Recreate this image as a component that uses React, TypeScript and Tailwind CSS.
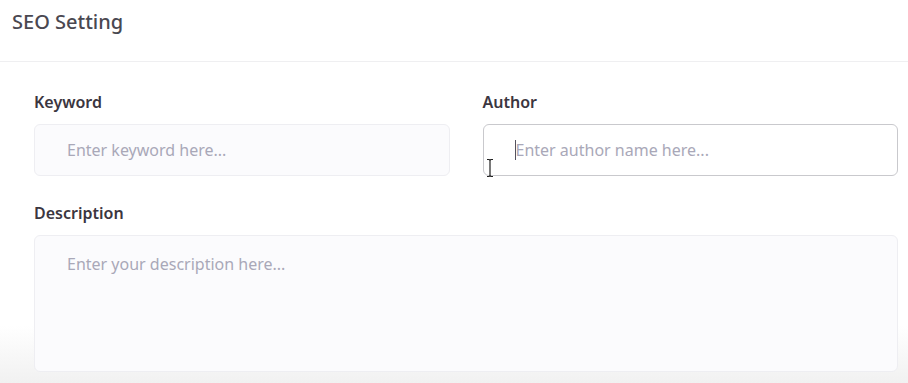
import React from 'react';

const font = { fontFamily: '"Noto Sans", "Open Sans", sans-serif' };

const Field: React.FC<{ label: string; placeholder: string; focused?: boolean }> = ({ label, placeholder, focused }) => (
    <div className="flex flex-col">
        <label className="h-5 mb-3 text-[16px] leading-5 font-semibold text-[#3b3640]">{label}</label>
        <div className="relative">
            <input
                placeholder={placeholder}
                className={`w-full h-[52px] rounded-md pl-[32px] pr-4 text-[16px] outline-none placeholder:text-[#a9a8b8] ${
                    focused ? 'bg-white border border-[#c9c9cd]' : 'bg-[#fbfbfd] border border-[#eeeef2]'
                }`}
            />
            {focused && (
                <>
                    {/* text caret */}
                    <span className="absolute left-[32px] top-[16px] w-px h-[20px] bg-[#55525e]" />
                    {/* mouse I-beam */}
                    <svg className="absolute left-[2px] top-[34px]" width="10" height="20" viewBox="0 0 10 20">
                        <path d="M2 1.5h2.2L5 2.3l.8-.8H8M5 2.3v15.4M2 18.5h2.2l.8-.8.8.8H8" stroke="#222" strokeWidth="1.2" fill="none" />
                    </svg>
                </>
            )}
        </div>
    </div>
);

export default function App() {
    return (
        <div style={font} className="w-[908px] h-[383px] overflow-hidden bg-linear-to-b from-white from-85% to-[#f1f1f1]">
            <div className="h-[62px] border-b border-[#efeff1] pl-[12px] pt-[8px]">
                <h2 className="text-[20px] leading-7 font-medium text-[#4a4851]">SEO Setting</h2>
            </div>
            <div className="pl-[34px] pr-[10px] pt-[30px]">
                <div className="grid grid-cols-2 gap-x-[33px]">
                    <Field label="Keyword" placeholder="Enter keyword here..." />
                    <Field label="Author" placeholder="Enter author name here..." focused />
                </div>
                <div className="mt-[27px] flex flex-col">
                    <label className="h-5 mb-3 text-[16px] leading-5 font-semibold text-[#3b3640]">Description</label>
                    <textarea
                        placeholder="Enter your description here..."
                        className="h-[137px] resize-none rounded-md bg-[#fbfbfd] border border-[#eeeef2] pl-[32px] pr-4 pt-[18px] text-[16px] leading-5 outline-none placeholder:text-[#a9a8b8]"
                    />
                </div>
            </div>
        </div>
    );
}
